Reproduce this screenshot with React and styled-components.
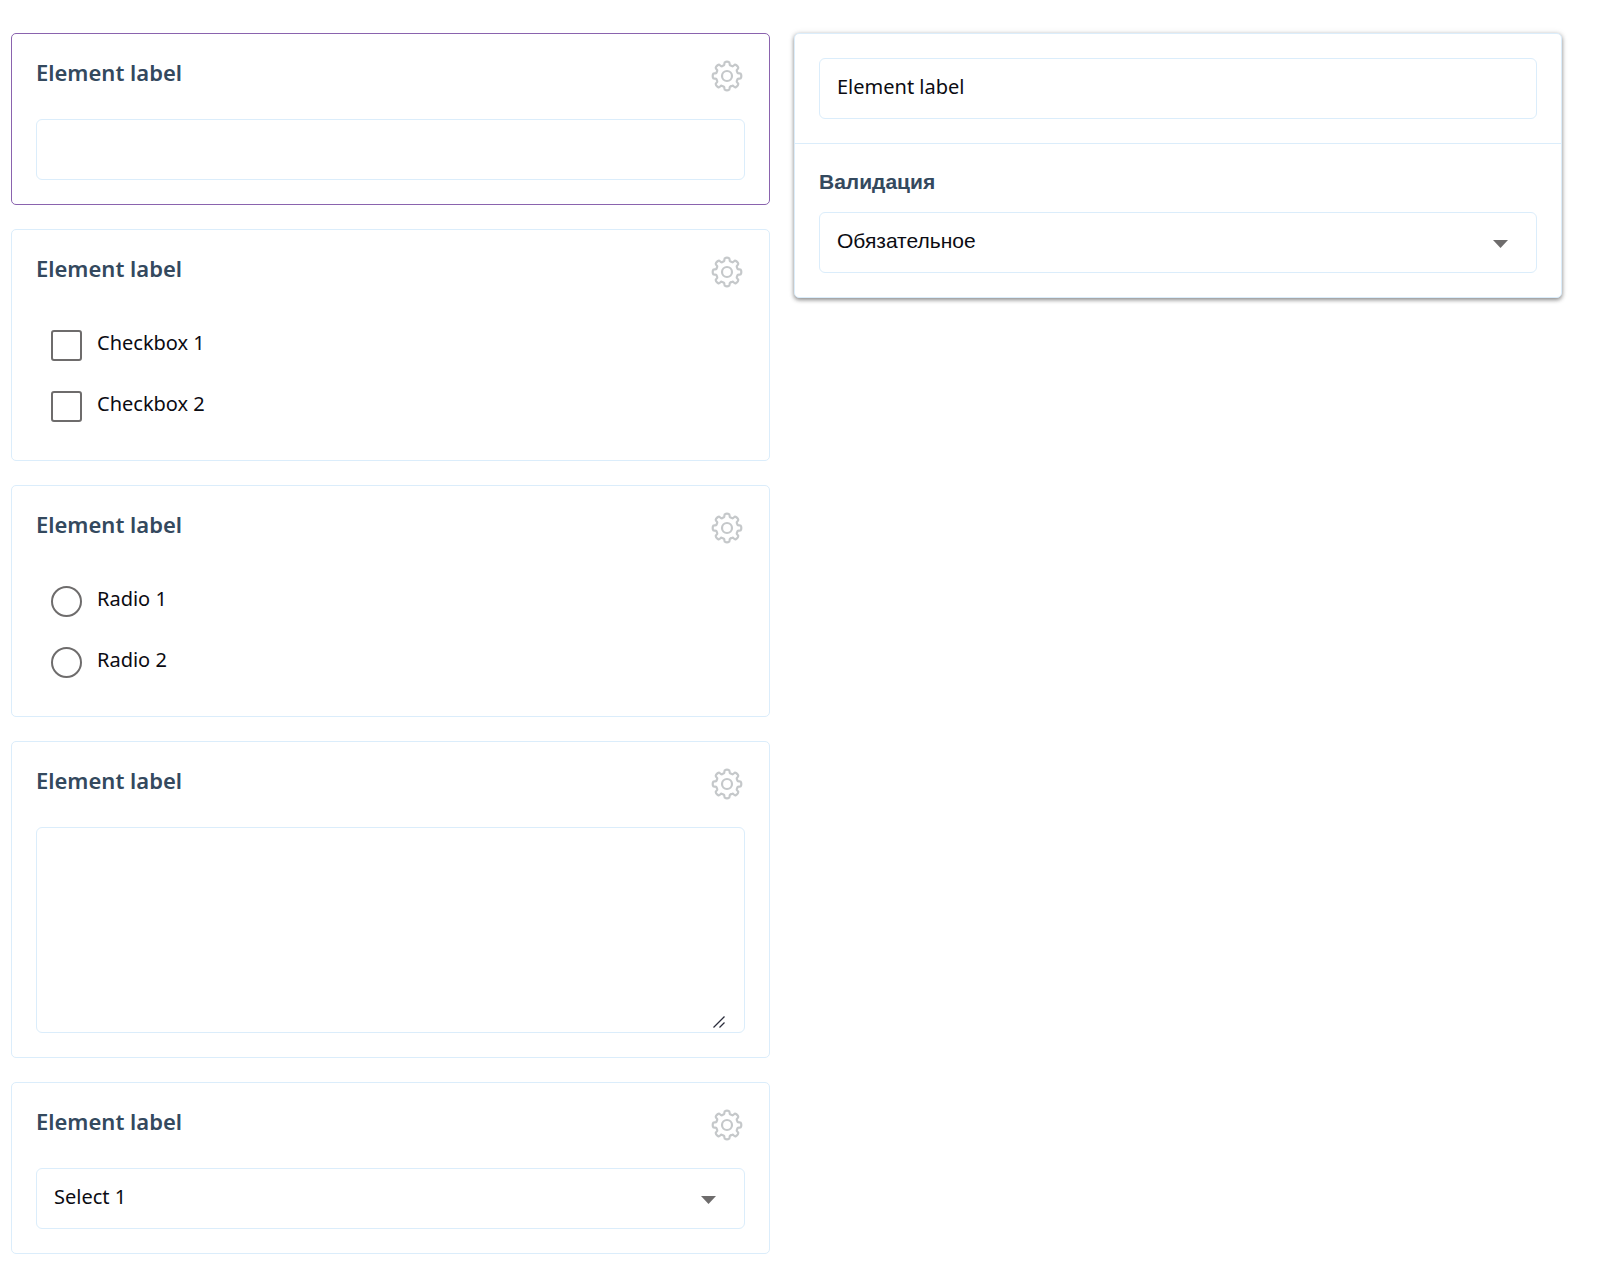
import React, { useState } from 'react';
import styled, { createGlobalStyle, css } from 'styled-components';

const color = {
  line: '#dbedfb',
  active: '#8a63ae',
  heading: '#34495e',
  text: '#0b0b12',
  control: '#6e6c6c',
  gear: '#c5c8ca',
};

const latin = `'Noto Sans', 'Open Sans', sans-serif`;
const cyrillic = `'Liberation Sans', Arial, sans-serif`;

const GlobalStyle = createGlobalStyle`
  *, *::before, *::after { box-sizing: border-box; }
  body {
    margin: 0;
    background: #fff;
    color: ${color.text};
    font-family: ${latin};
    font-size: 20px;
  }
`;

const Page = styled.main`
  display: grid;
  grid-template-columns: 759fr 768fr;
  align-items: start;
  gap: 24px;
  padding: 33px 38px 17px 11px;
`;

const FormColumn = styled.div`
  display: flex;
  flex-direction: column;
  gap: 24px;
`;

const Card = styled.section`
  padding: 24px;
  border: 1px solid ${(p) => (p.$active ? color.active : color.line)};
  border-radius: 5px;
  background: #fff;
`;

const CardHeader = styled.header`
  display: flex;
  justify-content: space-between;
  align-items: flex-start;
  height: 61px;
`;

const CardTitle = styled.label`
  color: ${color.heading};
  font-size: 22px;
  font-weight: 600;
  line-height: 29px;
`;

const GearButton = styled.button`
  display: grid;
  place-items: center;
  width: 36px;
  height: 36px;
  padding: 0;
  border: 0;
  background: none;
  color: ${color.gear};
  cursor: pointer;
`;

const field = css`
  display: block;
  width: 100%;
  border: 1px solid ${color.line};
  border-radius: 6px;
  background: #fff;
`;

const fieldText = css`
  height: 61px;
  padding: 0 17px 5px;
  color: ${color.text};
  font-family: ${(p) => (p.$cyrillic ? cyrillic : latin)};
  font-size: ${(p) => (p.$cyrillic ? 21 : 20)}px;
`;

const TextInput = styled.input`
  ${field}
  ${fieldText}
`;

const SelectWrap = styled.div`
  position: relative;
`;

const SelectInput = styled.select`
  ${field}
  ${fieldText}
  appearance: none;
`;

const Caret = styled.svg`
  position: absolute;
  right: 29px;
  top: 28px;
  color: ${color.control};
  pointer-events: none;
`;

const AreaWrap = styled.div`
  ${field}
  position: relative;
  padding: 0 17px;
`;

const AreaInput = styled.textarea`
  display: block;
  width: 100%;
  height: 204px;
  padding: 14px 0;
  border: 0;
  outline: 0;
  resize: none;
  background: none;
  font: inherit;
`;

const Grip = styled.svg`
  position: absolute;
  right: 19px;
  bottom: 4px;
  color: #2b2d3c;
  pointer-events: none;
`;

const Options = styled.div`
  display: flex;
  flex-direction: column;
  gap: 1px;
`;

const Option = styled.label`
  display: flex;
  align-items: center;
  gap: 15px;
  height: 60px;
  padding-left: 15px;
`;

const OptionText = styled.span`
  padding-bottom: 5px;
`;

const OptionInput = styled.input`
  appearance: none;
  width: 31px;
  height: 31px;
  margin: 0;
  border: 2px solid ${color.control};
  border-radius: ${(p) => (p.type === 'radio' ? '50%' : '3px')};
  background: #fff;

  &:checked {
    background: ${color.control};
    box-shadow: inset 0 0 0 5px #fff;
  }
`;

const Panel = styled.aside`
  border: 1px solid ${color.line};
  border-radius: 5px;
  background: #fff;
  box-shadow: 0 2px 4px rgba(0, 0, 0, 0.42), 0 0 6px rgba(0, 0, 0, 0.1);
`;

const PanelSection = styled.div`
  padding: 24px;

  & + & {
    border-top: 1px solid ${color.line};
  }
`;

const PanelTitle = styled.label`
  display: block;
  height: 44px;
  color: ${color.heading};
  font-family: ${cyrillic};
  font-size: 21px;
  font-weight: 700;
  line-height: 28px;
`;

/* Eight-toothed outline: polygon corners softened with quadratic curves. */
const gearPath = (() => {
  const corners = [];
  for (let tooth = 0; tooth < 8; tooth += 1) {
    [[-19, 11], [-13, 11.2], [-11, 14.2], [0, 14.4], [11, 14.2], [13, 11.2], [19, 11]].forEach(
      ([offset, radius]) => {
        const angle = ((tooth * 45 + offset - 90) * Math.PI) / 180;
        corners.push([15 + radius * Math.cos(angle), 15 + radius * Math.sin(angle)]);
      },
    );
  }
  const mid = (a, b) => `${((a[0] + b[0]) / 2).toFixed(2)} ${((a[1] + b[1]) / 2).toFixed(2)}`;
  const curves = corners.map((c, i) => {
    const next = corners[(i + 1) % corners.length];
    return `Q${c[0].toFixed(2)} ${c[1].toFixed(2)} ${mid(c, next)}`;
  });
  return `M${mid(corners[corners.length - 1], corners[0])}${curves.join('')}Z`;
})();

function GearIcon() {
  return (
    <svg width="30" height="30" viewBox="0 0 30 30" fill="none" stroke="currentColor" strokeWidth="2.2" overflow="visible" aria-hidden="true">
      <path d={gearPath} strokeLinejoin="round" />
      <circle cx="15" cy="15" r="5" />
    </svg>
  );
}

function ElementCard({ active, id, group, children }) {
  return (
    <Card $active={active} role={group ? 'group' : undefined} aria-labelledby={group ? `${id}-title` : undefined}>
      <CardHeader>
        <CardTitle id={`${id}-title`} as={group ? 'span' : undefined} htmlFor={group ? undefined : id}>
          Element label
        </CardTitle>
        <GearButton type="button" aria-label="Settings">
          <GearIcon />
        </GearButton>
      </CardHeader>
      {children}
    </Card>
  );
}

function Select({ id, cyrillic: isCyrillic, options }) {
  return (
    <SelectWrap>
      <SelectInput id={id} $cyrillic={isCyrillic}>
        {options.map((o) => (
          <option key={o}>{o}</option>
        ))}
      </SelectInput>
      <Caret width="15" height="8" viewBox="0 0 15 8" aria-hidden="true">
        <path d="M0 0h15L7.5 8z" fill="currentColor" />
      </Caret>
    </SelectWrap>
  );
}

function OptionList({ type, name, options }) {
  return (
    <Options>
      {options.map((o) => (
        <Option key={o}>
          <OptionInput type={type} name={name} />
          <OptionText>{o}</OptionText>
        </Option>
      ))}
    </Options>
  );
}

export default function App() {
  const [label, setLabel] = useState('Element label');

  return (
    <>
      <GlobalStyle />
      <Page>
        <FormColumn>
          <ElementCard id="text" active>
            <TextInput id="text" type="text" />
          </ElementCard>
          <ElementCard id="checks" group>
            <OptionList type="checkbox" name="checks" options={['Checkbox 1', 'Checkbox 2']} />
          </ElementCard>
          <ElementCard id="radios" group>
            <OptionList type="radio" name="radios" options={['Radio 1', 'Radio 2']} />
          </ElementCard>
          <ElementCard id="area">
            <AreaWrap>
              <AreaInput id="area" />
              <Grip width="12" height="12" viewBox="0 0 12 12" fill="none" stroke="currentColor" strokeWidth="1.3" aria-hidden="true">
                <path d="M.5 11.500L11.500 .5M6.500 11.500L11.500 6.500" />
              </Grip>
            </AreaWrap>
          </ElementCard>
          <ElementCard id="select">
            <Select id="select" options={['Select 1']} />
          </ElementCard>
        </FormColumn>
        <Panel>
          <PanelSection>
            <TextInput
              type="text"
              aria-label="Element label"
              value={label}
              onChange={(e) => setLabel(e.target.value)}
            />
          </PanelSection>
          <PanelSection>
            <PanelTitle htmlFor="validation">Валидация</PanelTitle>
            <Select id="validation" cyrillic options={['Обязательное']} />
          </PanelSection>
        </Panel>
      </Page>
    </>
  );
}
